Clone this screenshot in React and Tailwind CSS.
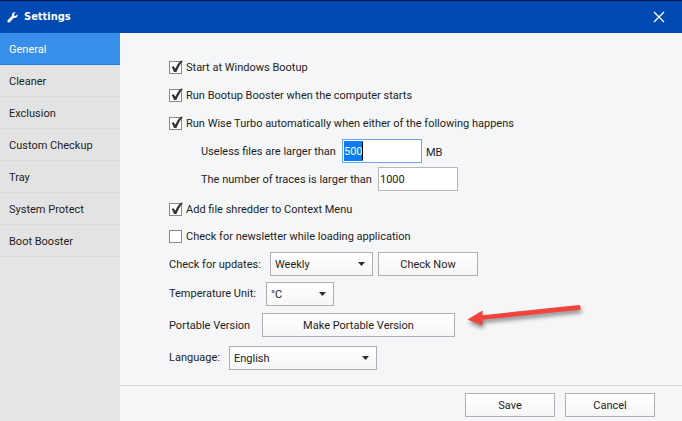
import { useEffect, useRef } from "react";

const sections = [
  "General",
  "Cleaner",
  "Exclusion",
  "Custom Checkup",
  "Tray",
  "System Protect",
  "Boot Booster",
];

const buttonLook =
  "h-6 border border-[#adafb3] bg-gradient-to-b from-white to-[#f6f6f7] pt-[2px] text-center";

function Check({ id, label, checked, className }) {
  return (
    <div className={`flex items-center ${className}`}>
      <span className="relative block h-[13px] w-[13px]">
        <input
          id={id}
          type="checkbox"
          defaultChecked={checked}
          className="peer block h-[13px] w-[13px] appearance-none border border-[#85878b] bg-white"
        />
        <svg
          viewBox="0 0 13 13"
          className="pointer-events-none absolute inset-0 hidden h-[13px] w-[13px] overflow-visible peer-checked:block"
        >
          <path
            d="M2.6 6 L4.8 5.2 L6.2 7.8 C7.8 4.4 9.8 1.2 12.2 -0.6 L13.8 0 C11 3.4 9.2 6.8 7.4 11 L5 11 C4.4 9.2 3.6 7.6 2.6 6Z"
            fill="#343434"
          />
        </svg>
      </span>
      <label htmlFor={id} className="pt-[2px] pl-1">
        {label}
      </label>
    </div>
  );
}

function Dropdown({ id, options, className }) {
  return (
    <span className={`relative block h-6 ${className}`}>
      <select
        id={id}
        className="h-6 w-full appearance-none border border-[#adafb3] bg-gradient-to-b from-white to-[#f6f6f7] pt-[2px] pl-1"
      >
        {options.map((o) => (
          <option key={o}>{o}</option>
        ))}
      </select>
      <svg
        viewBox="0 0 7 4"
        className="pointer-events-none absolute top-[10px] right-2 h-1 w-[7px]"
      >
        <path d="M0 0H7L3.5 4Z" fill="#2c2c2c" />
      </svg>
    </span>
  );
}

export default function App() {
  const sizeRef = useRef(null);

  useEffect(() => {
    sizeRef.current.focus();
    sizeRef.current.select();
  }, []);

  return (
    <div className="flex min-h-screen flex-col bg-[#f4f6f8] font-['Roboto','DejaVu_Sans',sans-serif] text-[11px] leading-4 text-[#1e1e1e]">
      <header className="flex h-[33px] items-center border-t border-[#00194a] bg-[#004ab2] pr-[17px] pl-[7px] text-white">
        <svg viewBox="0 0 11 11" className="h-[11px] w-[11px]">
          <path
            d="M10.4 2.2 L8.6 3.9 L7.2 3.6 L6.9 2.3 L8.6 0.5 C6.5 -0.3 4.5 1.6 5.1 3.7 L0.7 8.3 C-0.4 9.6 1.2 11.3 2.6 10.2 L7 5.8 C9.2 6.4 11.1 4.4 10.4 2.2Z"
            fill="#fff"
          />
        </svg>
        <h1 className="flex-1 pl-[6px] font-['DejaVu_Sans_Condensed','DejaVu_Sans',sans-serif] text-[11px] font-bold">
          Settings
        </h1>
        <button aria-label="Close" className="block">
          <svg viewBox="0 0 12 12" className="h-3 w-3">
            <path d="M1 1L11 11M11 1L1 11" stroke="#fff" strokeWidth="1.4" fill="none" />
          </svg>
        </button>
      </header>

      <div className="flex flex-1">
        <nav className="w-[120px] bg-[#e4e5e7]">
          {sections.map((s, i) => (
            <a
              key={s}
              href="#"
              className={`flex h-8 items-center border-b pt-[2px] pl-[9px] ${
                i === 0
                  ? "border-[#1b7fe0] bg-[#378fe9] text-white"
                  : "border-[#dadada] bg-[#e3e3e3]"
              }`}
            >
              {s}
            </a>
          ))}
        </nav>

        <div className="flex flex-1 flex-col">
          <main className="flex-1 pt-5 pl-[49px]">
            <Check id="startup" label="Start at Windows Bootup" checked className="h-7" />
            <Check
              id="booster"
              label="Run Bootup Booster when the computer starts"
              checked
              className="h-7"
            />
            <Check
              id="turbo"
              label="Run Wise Turbo automatically when either of the following happens"
              checked
              className="h-7"
            />
            <div className="flex h-7 items-center pl-8">
              <label htmlFor="size" className="w-[141px] pt-[2px]">
                Useless files are larger than
              </label>
              <span className="relative block">
                <input
                  id="size"
                  ref={sizeRef}
                  defaultValue="500"
                  className="block h-6 w-20 border border-[#6fa5e4] bg-white bg-[linear-gradient(#0a7cf5,#0a7cf5)] bg-[length:19px_20px] bg-[position:1px_1px] bg-no-repeat px-px outline-none selection:bg-[#0a7cf5] selection:text-white"
                />
                <span className="absolute top-[3px] left-5 h-[18px] w-px bg-black" />
              </span>
              <span className="pt-1 pl-1">MB</span>
            </div>
            <div className="flex h-7 items-center pl-8">
              <label htmlFor="traces" className="w-[177px] pt-[2px]">
                The number of traces is larger than
              </label>
              <input
                id="traces"
                defaultValue="1000"
                className="h-6 w-20 border border-[#b4b6ba] bg-white px-px"
              />
            </div>
            <Check
              id="shredder"
              label="Add file shredder to Context Menu"
              checked
              className="mt-[2px] h-7"
            />
            <Check
              id="newsletter"
              label="Check for newsletter while loading application"
              checked={false}
              className="h-[26px]"
            />
            <div className="flex h-[30px] items-center">
              <label htmlFor="updates" className="w-[101px] pt-[2px]">
                Check for updates:
              </label>
              <Dropdown id="updates" options={["Weekly", "Daily", "Monthly"]} className="w-[103px]" />
              <button className={`ml-[5px] w-[100px] ${buttonLook}`}>Check Now</button>
            </div>
            <div className="flex h-[30px] items-center">
              <label htmlFor="unit" className="w-[97px]">
                Temperature Unit:
              </label>
              <Dropdown id="unit" options={["°C", "°F"]} className="w-[68px]" />
            </div>
            <div className="relative flex h-8 items-center">
              <span className="w-[93px] pt-[2px]">Portable Version</span>
              <button className={`w-[193px] ${buttonLook}`}>Make Portable Version</button>
              <svg
                viewBox="0 0 120 36"
                className="pointer-events-none absolute -top-2 left-[296px] h-9 w-[120px] drop-shadow-[1px_3px_2px_rgba(0,0,0,0.45)]"
              >
                <path
                  d="M2.5 18.5L17.5 9.5V14.2L114.5 4Q116 6 115.5 8.8L17.5 18.8V24.5Z"
                  fill="#f0443c"
                />
              </svg>
            </div>
            <div className="flex h-[34px] items-center">
              <label htmlFor="language" className="w-[60px]">
                Language:
              </label>
              <Dropdown id="language" options={["English", "Deutsch"]} className="w-[148px]" />
            </div>
          </main>

          <footer className="flex h-9 justify-end gap-[10px] border-t border-[#d6d8da] pt-[7px] pr-[27px]">
            <button className={`w-[90px] ${buttonLook}`}>Save</button>
            <button className={`w-[90px] ${buttonLook}`}>Cancel</button>
          </footer>
        </div>
      </div>
    </div>
  );
}
